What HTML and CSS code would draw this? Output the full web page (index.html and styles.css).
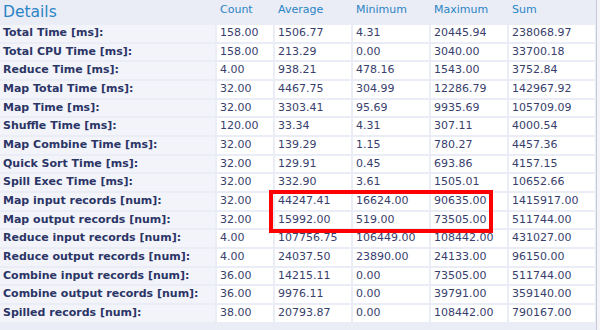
FILE: index.html
```html
<!DOCTYPE html>
<html>
<head>
<meta charset="utf-8">
<link rel="stylesheet" href="styles.css">
</head>
<body>
<div class="panel">
  <div class="grid">
    <div class="title">Details</div>
    <div class="colhead">Count</div>
    <div class="colhead">Average</div>
    <div class="colhead">Minimum</div>
    <div class="colhead">Maximum</div>
    <div class="colhead">Sum</div>

    <div class="label">Total Time [ms]:</div><div class="val">158.00</div><div class="val">1506.77</div><div class="val">4.31</div><div class="val">20445.94</div><div class="val">238068.97</div>
    <div class="label">Total CPU Time [ms]:</div><div class="val">158.00</div><div class="val">213.29</div><div class="val">0.00</div><div class="val">3040.00</div><div class="val">33700.18</div>
    <div class="label">Reduce Time [ms]:</div><div class="val">4.00</div><div class="val">938.21</div><div class="val">478.16</div><div class="val">1543.00</div><div class="val">3752.84</div>
    <div class="label">Map Total Time [ms]:</div><div class="val">32.00</div><div class="val">4467.75</div><div class="val">304.99</div><div class="val">12286.79</div><div class="val">142967.92</div>
    <div class="label">Map Time [ms]:</div><div class="val">32.00</div><div class="val">3303.41</div><div class="val">95.69</div><div class="val">9935.69</div><div class="val">105709.09</div>
    <div class="label">Shuffle Time [ms]:</div><div class="val">120.00</div><div class="val">33.34</div><div class="val">4.31</div><div class="val">307.11</div><div class="val">4000.54</div>
    <div class="label">Map Combine Time [ms]:</div><div class="val">32.00</div><div class="val">139.29</div><div class="val">1.15</div><div class="val">780.27</div><div class="val">4457.36</div>
    <div class="label">Quick Sort Time [ms]:</div><div class="val">32.00</div><div class="val">129.91</div><div class="val">0.45</div><div class="val">693.86</div><div class="val">4157.15</div>
    <div class="label">Spill Exec Time [ms]:</div><div class="val">32.00</div><div class="val">332.90</div><div class="val">3.61</div><div class="val">1505.01</div><div class="val">10652.66</div>
    <div class="label">Map input records [num]:</div><div class="val">32.00</div><div class="val">44247.41</div><div class="val">16624.00</div><div class="val">90635.00</div><div class="val">1415917.00</div>
    <div class="label">Map output records [num]:</div><div class="val">32.00</div><div class="val">15992.00</div><div class="val">519.00</div><div class="val">73505.00</div><div class="val">511744.00</div>
    <div class="label">Reduce input records [num]:</div><div class="val">4.00</div><div class="val">107756.75</div><div class="val">106449.00</div><div class="val">108442.00</div><div class="val">431027.00</div>
    <div class="label">Reduce output records [num]:</div><div class="val">4.00</div><div class="val">24037.50</div><div class="val">23890.00</div><div class="val">24133.00</div><div class="val">96150.00</div>
    <div class="label">Combine input records [num]:</div><div class="val">36.00</div><div class="val">14215.11</div><div class="val">0.00</div><div class="val">73505.00</div><div class="val">511744.00</div>
    <div class="label">Combine output records [num]:</div><div class="val">36.00</div><div class="val">9976.11</div><div class="val">0.00</div><div class="val">39791.00</div><div class="val">359140.00</div>
    <div class="label">Spilled records [num]:</div><div class="val">38.00</div><div class="val">20793.87</div><div class="val">0.00</div><div class="val">108442.00</div><div class="val">790167.00</div>
  </div>
  <div class="highlight"></div>
</div>
</body>
</html>
```

FILE: styles.css
```css
html, body {
  margin: 0;
  padding: 0;
  background: #f4f4f9;
}
body {
  width: 600px;
  height: 330px;
  overflow: hidden;
  font-family: "DejaVu Sans", Verdana, sans-serif;
}
.panel {
  position: relative;
  width: 596px;
  height: 330px;
  background: #eaecf6;
  border-right: 1px solid #c6c9d9;
}
.grid {
  display: grid;
  grid-template-columns: 215px 56px 76px 76px 76px 86px;
  grid-template-rows: 23px repeat(16, 16.67px);
  column-gap: 2px;
  row-gap: 2px;
}
.title {
  font-size: 15.5px;
  color: #2a85c4;
  padding: 3px 0 0 3px;
  line-height: 18px;
}
.colhead {
  font-size: 11px;
  color: #2a85c4;
  padding: 3px 0 0 3px;
  line-height: 13px;
}
.label {
  background: #f3f4fa;
  font-weight: bold;
  font-size: 11px;
  color: #2b3566;
  line-height: 16.67px;
  padding-left: 3px;
  white-space: nowrap;
}
.val {
  background: #ffffff;
  font-size: 11px;
  color: #383e6d;
  line-height: 16.67px;
  padding-left: 3px;
  white-space: nowrap;
}
.highlight {
  position: absolute;
  left: 269px;
  top: 190px;
  width: 216px;
  height: 35px;
  border: 4px solid #ff0000;
}
```
